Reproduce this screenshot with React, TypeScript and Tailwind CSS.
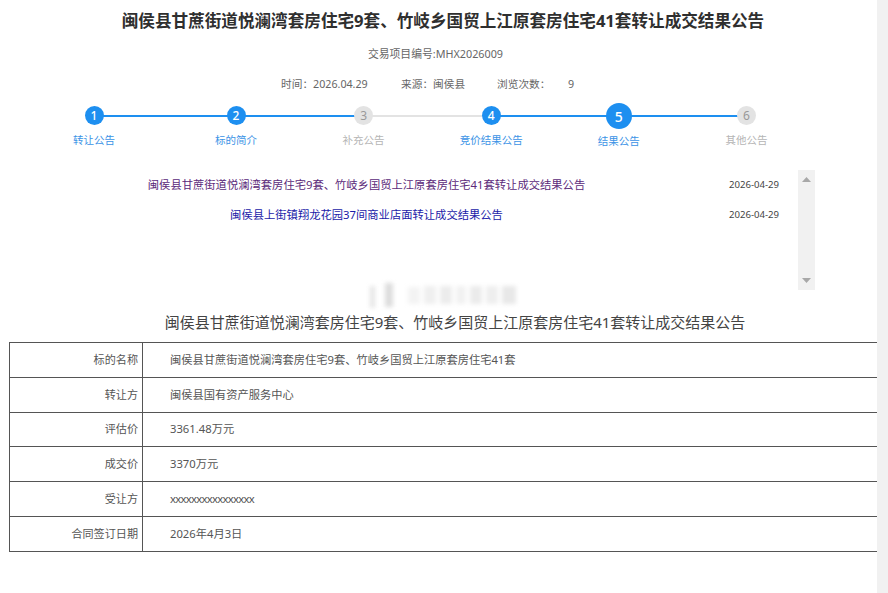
const FONT = "font-['Noto_Sans','Noto_Sans_CJK_SC',sans-serif]";

const steps = [
  { n: 1, label: "转让公告", on: true, line: "w-[142px] bg-[#1d8ff0]" },
  { n: 2, label: "标的简介", on: true, line: "w-[128px] bg-[#1d8ff0]" },
  { n: 3, label: "补充公告", on: false, line: "w-[127px] bg-[#e3e3e3]" },
  { n: 4, label: "竞价结果公告", on: true, line: "w-[128px] bg-[#1d8ff0]" },
  { n: 5, label: "结果公告", on: true, big: true, line: "w-[127px] bg-[#1d8ff0]" },
  { n: 6, label: "其他公告", on: false, line: "" },
];

const rows = [
  ["标的名称", "闽侯县甘蔗街道悦澜湾套房住宅9套、竹岐乡国贸上江原套房住宅41套"],
  ["转让方", "闽侯县国有资产服务中心"],
  ["评估价", "3361.48万元"],
  ["成交价", "3370万元"],
  ["受让方", "xxxxxxxxxxxxxxxx"],
  ["合同签订日期", "2026年4月3日"],
];

function Stepper() {
  return (
    <div className="flex h-[44px] pl-[30px] mt-[13px]">
      {steps.map((s, i) => (
        <div key={s.n} className={`relative w-[128px] shrink-0 flex flex-col items-center ${i === 1 ? "ml-[14px]" : ""} ${i > 1 ? "-ml-[0.4px]" : ""}`}>
          {s.line && <div className={`absolute left-1/2 top-[9px] h-[2px] ${s.line}`} />}
          <div className="h-[20px] flex items-center justify-center">
            <div
              className={`relative rounded-full flex items-center justify-center ${s.big ? "w-[26px] h-[26px] text-[14px]" : "w-[19px] h-[19px] text-[12px]"} ${s.on ? "bg-[#1d8ff0] text-white font-medium" : "bg-[#e3e3e3] text-[#999999]"}`}
            >
              {s.n}
            </div>
          </div>
          <div className={`mt-[5px] text-[10.5px] leading-[20px] ${s.on ? "text-[#3b93e6]" : "text-[#b5b5b5]"}`}>{s.label}</div>
        </div>
      ))}
    </div>
  );
}

function NoticeList() {
  return (
    <div className="flex h-[120px] mt-[20px]">
      <div className="w-[798px]">
        <div className="flex h-[30px] items-center">
          <div className="w-[715px] ml-[9px] text-center text-[11.3px] text-[#5b2a7a]">闽侯县甘蔗街道悦澜湾套房住宅9套、竹岐乡国贸上江原套房住宅41套转让成交结果公告</div>
          <div className="ml-[5px] text-[9.6px] text-[#444444]">2026-04-29</div>
        </div>
        <div className="flex h-[30px] items-center">
          <div className="w-[715px] ml-[9px] text-center text-[11.3px] text-[#1a1aa8]">闽侯县上街镇翔龙花园37间商业店面转让成交结果公告</div>
          <div className="ml-[5px] text-[9.6px] text-[#444444]">2026-04-29</div>
        </div>
      </div>
      <div className="w-[17px] bg-[#f1f1f1] flex flex-col justify-between items-center py-[7px]">
        <svg width="9" height="5" viewBox="0 0 9 5"><path d="M4.5 0 L9 5 L0 5 Z" fill="#a8a8a8" /></svg>
        <svg width="9" height="5" viewBox="0 0 9 5"><path d="M0 0 L9 0 L4.5 5 Z" fill="#a8a8a8" /></svg>
      </div>
    </div>
  );
}

function Watermark() {
  const bars = [
    [0, 5, 22, 3, "#e6e6e6"],
    [15, 8, 24, 0, "#dddddd"],
    [38, 12, 17, 4, "#f3f3f3"],
    [54, 12, 18, 3, "#efefef"],
    [70, 12, 18, 3, "#ececec"],
    [86, 10, 18, 3, "#f1f1f1"],
    [100, 12, 18, 3, "#ebebeb"],
    [116, 12, 18, 3, "#eeeeee"],
    [132, 14, 18, 3, "#e8e8e8"],
  ] as const;
  return (
    <div className="absolute left-[370px] top-[283px] w-[150px] h-[25px] blur-[2px]">
      {bars.map(([l, w, h, t, c], i) => (
        <div key={i} className="absolute" style={{ left: l, top: t, width: w, height: h, background: c }} />
      ))}
    </div>
  );
}

export default function App() {
  return (
    <div className={`relative flex w-[888px] h-[593px] overflow-hidden bg-white text-[#555555] ${FONT}`}>
      <div className="w-[877px] shrink-0">
        <h1 className="pt-[9px] pl-[9px] text-center text-[16.6px] leading-[24px] font-bold text-[#2f2f2f]">闽侯县甘蔗街道悦澜湾套房住宅9套、竹岐乡国贸上江原套房住宅41套转让成交结果公告</h1>
        <div className="mt-[12px] pr-[6px] text-center text-[10.8px] leading-[18px] text-[#666666]">交易项目编号:MHX2026009</div>
        <div className="mt-[12px] h-[18px] flex items-center pl-[281px] text-[10.7px] text-[#666666]">
          <span className="w-[120px]">时间：2026.04.29</span>
          <span className="w-[96px]">来源：闽侯县</span>
          <span className="w-[71px]">浏览次数：</span>
          <span>9</span>
        </div>
        <Stepper />
        <NoticeList />
        <h2 className="mt-[20px] pl-[33px] text-center text-[15px] leading-[24px] font-normal text-[#444444]">闽侯县甘蔗街道悦澜湾套房住宅9套、竹岐乡国贸上江原套房住宅41套转让成交结果公告</h2>
        <div className="mt-[8px] ml-[9px] w-[868px] border-t border-l border-[#555555]">
          {rows.map(([k, v], i) => (
            <div key={k} className={`flex border-b border-[#555555] ${i === 2 ? "h-[34px]" : "h-[35px]"}`}>
              <div className="w-[133px] border-r border-[#555555] pr-[4px] flex items-center justify-end text-[11.1px] text-[#555555]">{k}</div>
              <div className={`pl-[27px] flex items-center text-[11.25px] text-[#555555] ${i === 4 ? "tracking-[-0.7px]" : ""}`}>{v}</div>
            </div>
          ))}
        </div>
      </div>
      <div className="flex-1 bg-[#f1f1f1]" />
      <Watermark />
    </div>
  );
}
